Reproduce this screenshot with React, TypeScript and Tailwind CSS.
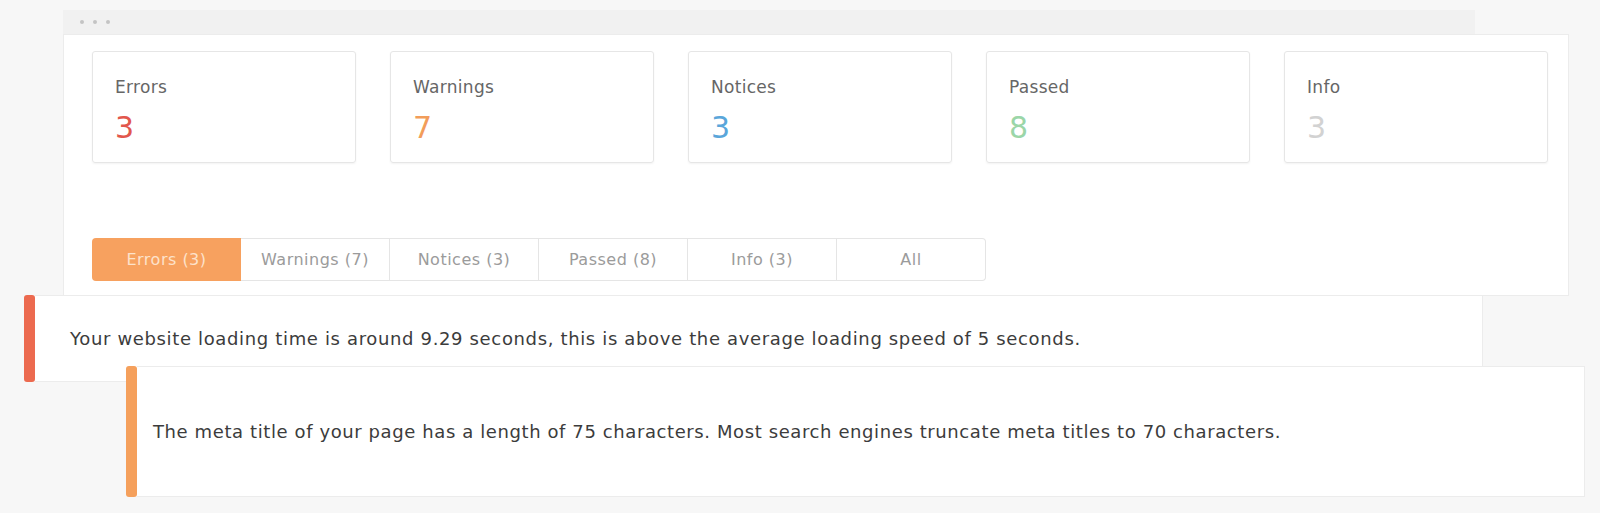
const stats = [
  { label: 'Errors', value: 3, color: 'text-[#e2574c]' },
  { label: 'Warnings', value: 7, color: 'text-[#f29d5a]' },
  { label: 'Notices', value: 3, color: 'text-[#5aa6da]' },
  { label: 'Passed', value: 8, color: 'text-[#9bd6a8]' },
  { label: 'Info', value: 3, color: 'text-[#d2d2d2]' },
];

const tabs = ['Errors (3)', 'Warnings (7)', 'Notices (3)', 'Passed (8)', 'Info (3)', 'All'];

export default function App() {
  return (
    <div className="w-[1600px] h-[513px] overflow-hidden bg-[#f7f7f7] pt-[10px] font-['DejaVu_Sans',sans-serif]">
      <div className="ml-[63px] w-[1506px]">
        <div className="h-[24px] w-[1412px] bg-[#f1f1f1] flex items-center gap-[9px] pl-[17px]">
          <span className="w-[4px] h-[4px] rounded-full bg-[#c4c4c4]" />
          <span className="w-[4px] h-[4px] rounded-full bg-[#c4c4c4]" />
          <span className="w-[4px] h-[4px] rounded-full bg-[#c4c4c4]" />
        </div>
        <div className="h-[262px] bg-white border border-[#ececec] pl-[28px] pt-[16px]">
          <div className="flex gap-[34px]">
            {stats.map(s => (
              <div
                key={s.label}
                className="w-[264px] h-[112px] rounded-[3px] border border-[#e6e6e6] shadow-[0_1px_2px_rgba(0,0,0,0.05)] pl-[22px] pt-[23px]"
              >
                <div className="text-[17px] leading-[24px] tracking-[0.3px] text-[#666]">{s.label}</div>
                <div className={`mt-[11px] text-[30px] leading-[36px] ${s.color}`}>{s.value}</div>
              </div>
            ))}
          </div>
          <div className="mt-[75px] flex">
            {tabs.map((t, i) => (
              <div
                key={t}
                className={
                  i === 0
                    ? 'w-[149px] h-[43px] flex items-center justify-center rounded-l-[4px] bg-[#f7a15f] text-[16px] tracking-[0.5px] text-[#fde2cb]'
                    : 'w-[149px] h-[43px] flex items-center justify-center border border-l-0 border-[#e5e5e5] text-[16px] tracking-[0.5px] text-[#9b9b9b] last:rounded-r-[4px]'
                }
              >
                {t}
              </div>
            ))}
          </div>
        </div>
      </div>

      <div className="ml-[24px] mt-[-1px] w-[1459px] h-[87px] flex relative">
        <div className="w-[11px] rounded-[3px] bg-[#ec6a4f]" />
        <div className="flex-1 bg-white border-y border-r border-[#ececec] flex items-center pl-[35px] text-[18px] tracking-[0.65px] text-[#3c3c3c]">
          Your website loading time is around 9.29 seconds, this is above the average loading speed of 5 seconds.
        </div>
      </div>

      <div className="ml-[126px] mt-[-16px] w-[1459px] h-[131px] flex relative">
        <div className="w-[11px] rounded-[3px] bg-[#f5a05c]" />
        <div className="flex-1 bg-white border-y border-r border-[#ececec] flex items-center pl-[16px] text-[18px] tracking-[0.6px] text-[#3c3c3c]">
          The meta title of your page has a length of 75 characters. Most search engines truncate meta titles to 70 characters.
        </div>
      </div>
    </div>
  );
}
